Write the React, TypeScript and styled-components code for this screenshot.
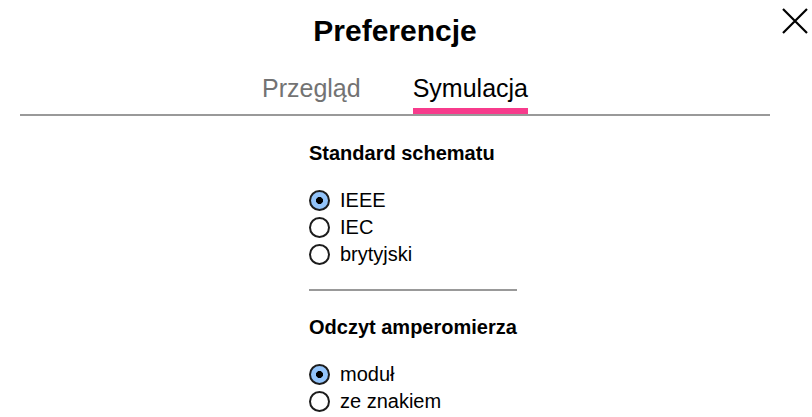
import { useState } from 'react';
import styled, { createGlobalStyle } from 'styled-components';

const GlobalStyle = createGlobalStyle`
  body {
    margin: 0;
    background: #fff;
    font-family: 'Liberation Sans', Arial, sans-serif;
    color: #000;
  }
`;

const Page = styled.div`
  display: flex;
  align-items: flex-start;
  width: 812px;
  height: 417px;
  overflow: hidden;
`;

const Panel = styled.div`
  width: 750px;
  margin-left: 20px;
  display: flex;
  flex-direction: column;
`;

const Title = styled.h1`
  margin: 14px 0 0;
  font-size: 30px;
  line-height: 34px;
  font-weight: 700;
  text-align: center;
`;

const TabBar = styled.div`
  display: flex;
  justify-content: center;
  gap: 52px;
  margin-top: 26px;
  border-bottom: 2px solid #999;
`;

const Tab = styled.button<{ $active: boolean }>`
  border: none;
  background: none;
  padding: 0 0 5px;
  margin: 0;
  font-family: inherit;
  font-size: 25px;
  line-height: 29px;
  cursor: pointer;
  color: ${(p) => (p.$active ? '#000' : '#737373')};
  border-bottom: 6px solid ${(p) => (p.$active ? '#f73b8c' : 'transparent')};
`;

const Content = styled.div`
  margin-left: 289px;
  padding-top: 26px;
  width: fit-content;
`;

const Heading = styled.h2<{ $spaced?: boolean }>`
  margin: ${(p) => (p.$spaced ? '25px' : '0')} 0 22px;
  font-size: 20px;
  line-height: 23px;
  font-weight: 700;
  white-space: nowrap;
`;

const Option = styled.label`
  display: flex;
  align-items: center;
  gap: 10px;
  height: 27px;
  font-size: 20px;
  line-height: 27px;
  cursor: pointer;
`;

const Radio = styled.input`
  appearance: none;
  margin: 0;
  width: 21px;
  height: 21px;
  border-radius: 50%;
  border: 2px solid #1c1c1c;
  background: #fff;
  box-sizing: border-box;

  &:checked {
    background: radial-gradient(circle, #000 0 3.2px, #93c4fa 3.8px);
  }
`;

const Separator = styled.hr`
  margin: 21px 0 0;
  border: none;
  border-top: 2px solid #999;
`;

const CloseButton = styled.button`
  margin: 8px 0 0 12px;
  padding: 0;
  border: none;
  background: none;
  width: 26px;
  height: 26px;
  cursor: pointer;
`;

const standards = ['IEEE', 'IEC', 'brytyjski'];
const readings = ['moduł', 'ze znakiem'];

export default function App() {
  const [tab, setTab] = useState('sim');
  const [standard, setStandard] = useState('IEEE');
  const [reading, setReading] = useState('moduł');

  return (
    <Page>
      <GlobalStyle />
      <Panel>
        <Title>Preferencje</Title>
        <TabBar>
          <Tab $active={tab === 'overview'} onClick={() => setTab('overview')}>
            Przegląd
          </Tab>
          <Tab $active={tab === 'sim'} onClick={() => setTab('sim')}>
            Symulacja
          </Tab>
        </TabBar>
        <Content>
          <Heading>Standard schematu</Heading>
          {standards.map((s) => (
            <Option key={s}>
              <Radio
                type='radio'
                name='standard'
                checked={standard === s}
                onChange={() => setStandard(s)}
              />
              {s}
            </Option>
          ))}
          <Separator />
          <Heading $spaced>Odczyt amperomierza</Heading>
          {readings.map((r) => (
            <Option key={r}>
              <Radio
                type='radio'
                name='reading'
                checked={reading === r}
                onChange={() => setReading(r)}
              />
              {r}
            </Option>
          ))}
        </Content>
      </Panel>
      <CloseButton aria-label='Zamknij'>
        <svg width='26' height='26' viewBox='0 0 26 26'>
          <path d='M1 1 L25 25 M25 1 L1 25' stroke='#000' strokeWidth='2.2' />
        </svg>
      </CloseButton>
    </Page>
  );
}
